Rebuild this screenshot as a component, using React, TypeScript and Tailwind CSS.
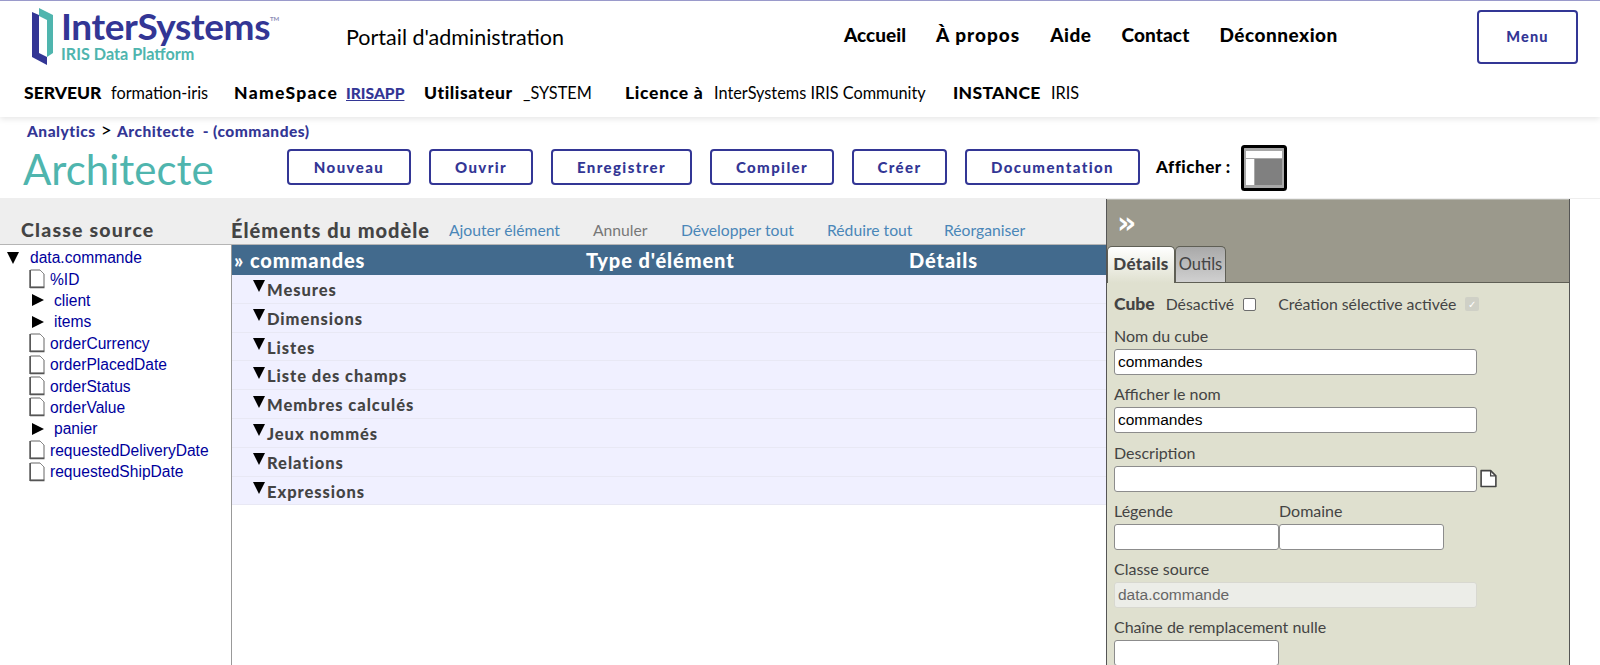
import React from "react";

const FUTURA = "font-['Lato',sans-serif]";
const ARIAL = "font-['Liberation_Sans',Arial,sans-serif]";

const NAV = [
  { label: "Accueil", tracking: "tracking-normal" },
  { label: "À propos", tracking: "tracking-[1px]" },
  { label: "Aide", tracking: "tracking-[0.5px]" },
  { label: "Contact", tracking: "tracking-[0.1px]" },
  { label: "Déconnexion", tracking: "tracking-[0.5px]" },
];
const TOOLBAR = [
  { label: "Nouveau", width: "w-[124px]" },
  { label: "Ouvrir", width: "w-[104px]" },
  { label: "Enregistrer", width: "w-[141px]" },
  { label: "Compiler", width: "w-[124px]" },
  { label: "Créer", width: "w-[95px]" },
  { label: "Documentation", width: "w-[175px]" },
];
const ACTIONS = [
  { label: "Ajouter élément", color: "text-[#4a86b8]", width: "w-[144px]" },
  { label: "Annuler", color: "text-[#777777]", width: "w-[88px]" },
  { label: "Développer tout", color: "text-[#4a86b8]", width: "w-[146px]" },
  { label: "Réduire tout", color: "text-[#4a86b8]", width: "w-[117px]" },
  { label: "Réorganiser", color: "text-[#4a86b8]", width: "w-[100px]" },
];
const SOURCE_TREE: { label: string; kind: "file" | "folder" }[] = [
  { label: "%ID", kind: "file" },
  { label: "client", kind: "folder" },
  { label: "items", kind: "folder" },
  { label: "orderCurrency", kind: "file" },
  { label: "orderPlacedDate", kind: "file" },
  { label: "orderStatus", kind: "file" },
  { label: "orderValue", kind: "file" },
  { label: "panier", kind: "folder" },
  { label: "requestedDeliveryDate", kind: "file" },
  { label: "requestedShipDate", kind: "file" },
];
const MODEL_ROWS = [
  "Mesures",
  "Dimensions",
  "Listes",
  "Liste des champs",
  "Membres calculés",
  "Jeux nommés",
  "Relations",
  "Expressions",
];

function Logo() {
  return (
    <div className="flex items-start">
      <svg width="24" height="60" viewBox="0 0 24 60" className="mt-[6px] ml-[31px] shrink-0">
        <path d="M8 1 L22 8 V46 L16 50 V13 L8 9 Z" fill="#4fb5ae" />
        <path d="M1 5 L8 8 V46 L16 50 V58 L1 50 Z" fill="#333695" />
      </svg>
      <div className="ml-[6px] mt-[7px] flex flex-col">
        <div className={`${FUTURA} flex h-[36px] items-start text-[37px] leading-[36px] font-bold tracking-[-0.4px] text-[#333695]`}>
          InterSystems
          <span className="mt-[7px] text-[6px] leading-[8px] tracking-normal text-[#8b8bb5]">TM</span>
        </div>
        <div className={`${FUTURA} text-[16.2px] leading-[19px] font-bold text-[#4fb5ae]`}>IRIS Data Platform</div>
      </div>
    </div>
  );
}

function PageHeader() {
  return (
    <header className="relative z-10 h-[117px] shrink-0 border-t border-[#9a9acb] bg-white shadow-[0_2px_6px_rgba(0,0,0,0.1)]">
      <div className="flex h-[82px] items-start">
        <div className="w-[346px] shrink-0">
          <Logo />
        </div>
        <div className={`${FUTURA} mt-[23px] w-[498px] shrink-0 text-[21.5px] leading-[26px] text-black`}>Portail d'administration</div>
        <nav className={`${FUTURA} mt-[23px] flex w-[633px] shrink-0 gap-[30px] text-[19px] leading-[22px] font-black text-black`}>
          {NAV.map((item) => (
            <span key={item.label} className={item.tracking}>
              {item.label}
            </span>
          ))}
        </nav>
        <button className={`${FUTURA} mt-[9px] h-[54px] w-[101px] rounded border-2 border-[#333695] bg-white text-[14.5px] font-black tracking-[1.2px] text-[#333695]`}>
          Menu
        </button>
      </div>
      <div className={`${FUTURA} flex items-center pl-[24px] text-[16.3px] leading-[20px] text-black`}>
        <b className="w-[87px] text-[17.5px] font-black">SERVEUR</b>
        <span className="w-[123px]">formation-iris</span>
        <b className="w-[112px] text-[17.5px] font-black tracking-[1.3px]">NameSpace</b>
        <a className="w-[78px] text-[15.6px] font-black text-[#333695] underline">IRISAPP</a>
        <b className="w-[99px] text-[17.5px] font-black tracking-[0.6px]">Utilisateur</b>
        <span className="w-[102px]">_SYSTEM</span>
        <b className="w-[89px] text-[17.5px] font-black tracking-[0.7px]">Licence à</b>
        <span className="w-[239px]">InterSystems IRIS Community</span>
        <b className="w-[98px] text-[17.5px] font-black tracking-[0.3px]">INSTANCE</b>
        <span>IRIS</span>
      </div>
    </header>
  );
}

function TitleBar() {
  return (
    <section className="h-[82px] shrink-0 border-b border-[#eeeeee] bg-white">
      <div className={`${FUTURA} pt-[3px] pl-[27px] text-[15.5px] leading-[20px] font-black tracking-[0.5px] text-[#333695]`}>
        Analytics <span className="mx-[1px] text-[19px] font-normal text-black">&gt;</span> Architecte <span className="ml-[4px]">- (commandes)</span>
      </div>
      <div className="flex items-start pl-[23px]">
        <h1 className={`${FUTURA} mt-[3px] w-[264px] shrink-0 text-[42px] leading-[50px] font-normal text-[#4fb5ae]`}>Architecte</h1>
        <div className="mt-[8px] flex gap-[18px]">
          {TOOLBAR.map((button) => (
            <button
              key={button.label}
              className={`${FUTURA} h-[36px] ${button.width} rounded border-2 border-[#333695] bg-white text-[15px] font-black tracking-[1.4px] text-[#333695]`}
            >
              {button.label}
            </button>
          ))}
        </div>
        <span className={`${FUTURA} mt-[16px] ml-[16px] w-[85px] shrink-0 text-[17px] leading-[20px] font-black tracking-[0.5px] text-black`}>Afficher :</span>
        <svg width="46" height="46" viewBox="0 0 46 46" className="mt-[4px] shrink-0">
          <rect x="1.5" y="1.5" width="43" height="43" rx="2" fill="#a8a8a8" stroke="#000" strokeWidth="3" />
          <rect x="5" y="6" width="36" height="7" fill="#fff" />
          <rect x="5" y="14" width="8" height="26" fill="#fff" />
          <rect x="14" y="14" width="27" height="26" fill="#808080" />
        </svg>
      </div>
    </section>
  );
}

function FileIcon() {
  return (
    <svg width="16" height="20" viewBox="0 0 16 20" className="shrink-0">
      <path d="M1.5 1 H11 L15 5 V18 H1.5 Z" fill="#fff" stroke="#666" strokeWidth="1" />
      <path d="M1 18.5 H15.5 M1 1 V19" stroke="#555" strokeWidth="1.4" />
      <path d="M11 1 L15 5" fill="none" stroke="#888" strokeWidth="1" />
    </svg>
  );
}

function SourceColumn() {
  return (
    <aside className="flex w-[231px] shrink-0 flex-col">
      <div className={`${FUTURA} h-[46px] shrink-0 border-b border-[#b5b5b5] bg-[#eeeeee] pt-[19px] pl-[21px] text-[19.5px] leading-[24px] font-black tracking-[1.2px] text-[#444444]`}>
        Classe source
      </div>
      <ul className={`${ARIAL} pt-[2px] text-[15.6px] leading-[21px] text-[#00009c]`}>
        <li className="flex h-[21.4px] items-center pl-[7px]">
          <span className="mr-[11px] h-0 w-0 border-x-[6.5px] border-t-[12px] border-x-transparent border-t-black" />
          data.commande
        </li>
        {SOURCE_TREE.map((node) => (
          <li key={node.label} className="flex h-[21.4px] items-center pl-[29px]">
            {node.kind === "file" ? (
              <>
                <FileIcon />
                <span className="ml-[5px]">{node.label}</span>
              </>
            ) : (
              <>
                <span className="ml-[3px] mr-[10px] h-0 w-0 border-y-[6px] border-l-[12px] border-y-transparent border-l-black" />
                <span>{node.label}</span>
              </>
            )}
          </li>
        ))}
      </ul>
    </aside>
  );
}

function ModelColumn() {
  return (
    <main className="flex w-[875px] shrink-0 flex-col">
      <div className={`${FUTURA} flex h-[46px] shrink-0 items-end border-b border-[#b5b5b5] bg-[#eeeeee] pb-[2px] leading-[24px]`}>
        <span className="w-[218px] shrink-0 text-[20px] font-black tracking-[1px] text-[#444444]">Éléments du modèle</span>
        {ACTIONS.map((action) => (
          <span key={action.label} className={`${action.width} shrink-0 text-[15.7px] ${action.color}`}>
            {action.label}
          </span>
        ))}
      </div>
      <div className="flex flex-1 flex-col border-l border-[#999999]">
        <div className={`${FUTURA} flex h-[30px] shrink-0 items-center bg-[#426a8d] text-[20px] font-black tracking-[0.9px] text-white`}>
          <span className="w-[354px] pl-[2px]">» commandes</span>
          <span className="w-[323px]">Type d'élément</span>
          <span>Détails</span>
        </div>
        {MODEL_ROWS.map((row) => (
          <div
            key={row}
            className={`${FUTURA} flex h-[28.8px] shrink-0 items-center border-b border-[#e8e8f4] bg-[#f0f0ff] pt-[3px] pl-[21px] text-[16.5px] font-black tracking-[0.95px] text-[#444444]`}
          >
            <span className="mr-[2px] mb-[8px] h-0 w-0 border-x-[6.5px] border-t-[12px] border-x-transparent border-t-black" />
            {row}
          </div>
        ))}
      </div>
    </main>
  );
}

function Field({ label, value, width, disabled }: { label: string; value?: string; width: string; disabled?: boolean }) {
  return (
    <div>
      <div className={`${FUTURA} text-[16px] leading-[21px] text-[#444444]`}>{label}</div>
      <input
        readOnly
        disabled={disabled}
        value={value ?? ""}
        className={`${ARIAL} mt-[3px] block h-[26px] ${width} rounded-[3px] border px-[3px] text-[15.5px] ${disabled ? "border-[#d8d8d0] bg-[#ecede8] text-[#666666]" : "border-[#8c8c8c] bg-white text-black"}`}
      />
    </div>
  );
}

function DetailsPanel() {
  return (
    <aside className="flex h-full w-[464px] shrink-0 flex-col border-r border-l border-[#555555] bg-[#dfe0cf]">
      <div className="flex h-[84px] shrink-0 flex-col justify-between border-t border-b border-t-[#b8b8b0] border-b-[#5f5f55] bg-[#9b998c]">
        <span className="pt-[5px] pl-[10px] font-['DejaVu_Sans',sans-serif] text-[30px] leading-[36px] font-bold text-white">»</span>
        <div className={`${FUTURA} flex items-end text-[16.5px] leading-[20px]`}>
          <span className="mb-[-1px] flex h-[37px] w-[68px] items-center justify-center rounded-t-[5px] border border-b-0 border-[#5f5f55] bg-gradient-to-b from-white to-[#dfe0cf] pb-[2px] text-[17px] font-black tracking-[0.3px] text-[#444444]">
            Détails
          </span>
          <span className="flex h-[36px] w-[51px] items-center justify-center rounded-t-[5px] border border-b-0 border-[#5f5f55] bg-gradient-to-b from-[#a9a9a9] to-[#d0d0d0] pb-[2px] text-[#444444]">
            Outils
          </span>
        </div>
      </div>
      <div className="flex flex-col gap-[8.2px] pt-[9px] pl-[7px]">
        <div className={`${FUTURA} mb-[1px] flex h-[24px] items-center text-[15.8px] text-[#444444]`}>
          <b className="text-[17.5px] font-black">Cube</b>
          <span className="ml-[11px]">Désactivé</span>
          <input readOnly type="checkbox" className="ml-[9px] h-[13px] w-[13px] appearance-none rounded-[2px] border border-[#6d6d6d] bg-white" />
          <span className="ml-[22px]">Création sélective activée</span>
          <span className="ml-[9px] flex h-[14px] w-[14px] items-center justify-center rounded-[2px] bg-[#cfd0c6] text-[10px] leading-none text-white">✓</span>
        </div>
        <Field label="Nom du cube" value="commandes" width="w-[363px]" />
        <Field label="Afficher le nom" value="commandes" width="w-[363px]" />
        <div>
          <div className={`${FUTURA} text-[16px] leading-[21px] text-[#444444]`}>Description</div>
          <div className="mt-[3px] flex items-center">
            <input readOnly className="block h-[26px] w-[363px] rounded-[3px] border border-[#8c8c8c] bg-white" />
            <svg width="19" height="19" viewBox="0 0 18 18" className="ml-[2px]">
              <path d="M2 1.5 H11 L16 6.5 V16.5 H2 Z" fill="#fff" stroke="#444" strokeWidth="1.5" strokeLinejoin="round" />
              <path d="M11 1.5 V6.5 H16" fill="none" stroke="#444" strokeWidth="1.2" />
            </svg>
          </div>
        </div>
        <div className="flex">
          <Field label="Légende" width="w-[165px]" />
          <Field label="Domaine" width="w-[165px]" />
        </div>
        <Field label="Classe source" value="data.commande" width="w-[363px]" disabled />
        <Field label="Chaîne de remplacement nulle" width="w-[165px]" />
      </div>
    </aside>
  );
}

export default function App() {
  return (
    <div className="flex h-[665px] w-[1600px] flex-col overflow-hidden bg-white">
      <PageHeader />
      <TitleBar />
      <div className="flex min-h-0 flex-1">
        <SourceColumn />
        <ModelColumn />
        <DetailsPanel />
      </div>
    </div>
  );
}
